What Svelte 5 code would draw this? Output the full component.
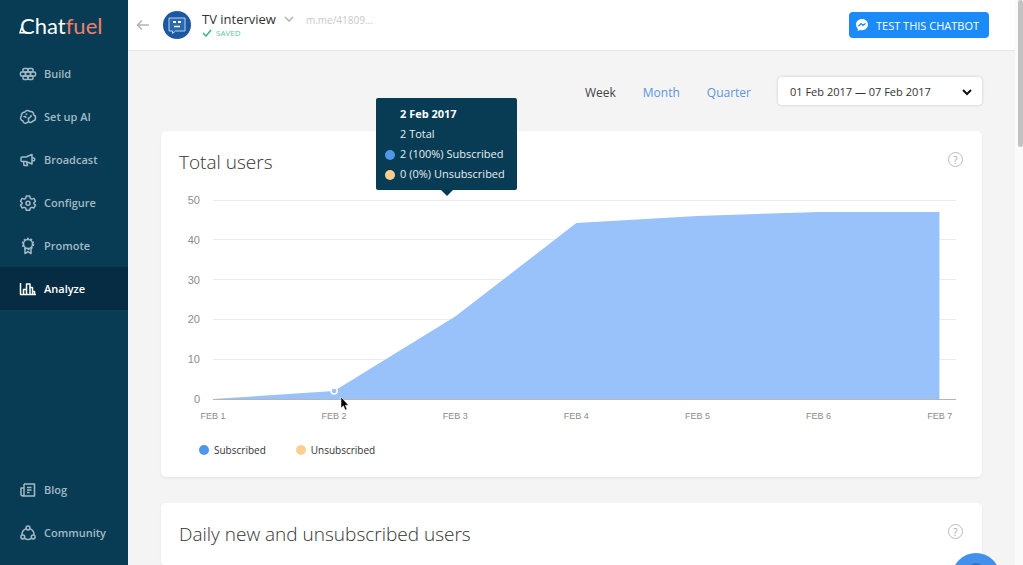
<script>
  const mainLinks = [
    { name: 'Build', icon: 'build' },
    { name: 'Set up AI', icon: 'ai' },
    { name: 'Broadcast', icon: 'broadcast' },
    { name: 'Configure', icon: 'configure' },
    { name: 'Promote', icon: 'promote' },
    { name: 'Analyze', icon: 'analyze' }
  ];

  const footLinks = [
    { name: 'Blog', icon: 'blog' },
    { name: 'Community', icon: 'community' }
  ];

  let active = 'Analyze';

  const periods = ['Week', 'Month', 'Quarter'];
  let period = 'Week';

  const ranges = ['01 Feb 2017 — 07 Feb 2017'];
  let range = ranges[0];

  // total subscribed users per day
  const data = [0, 2, 20.7, 44.2, 46, 47, 47];
  const ticks = [50, 40, 30, 20, 10, 0];
  const max = 50;
  // share of the plot width taken by the days, the grid runs a bit further
  const span = 97.8;

  let hovered = 1;

  const xPos = (i) => `${(i / (data.length - 1)) * span}%`;
  const yPos = (v) => `${100 - (v / max) * 100}%`;

  $: area =
    `0,${max} ` +
    data.map((v, i) => `${i},${max - v}`).join(' ') +
    ` ${data.length - 1},${max}`;
</script>

<div class="app">
  <aside class="sidebar">
    <a class="logo" href="#home" aria-label="Chatfuel">
      <svg class="logo-tail" width="10" height="6" viewBox="0 0 10 6">
        <path d="M2.500 0 L1 4.800 H8" />
      </svg>
      <span>Chat</span><span class="fuel">fuel</span>
    </a>

    <nav class="main-nav">
      {#each mainLinks as link}
        <a class="item" class:active={link.name === active} href={'#' + link.icon}>
          <svg class="icon" width="18" height="18" viewBox="0 0 18 18">
            {#if link.icon === 'build'}
              <rect x="4" y="3.5" width="5" height="3.6" rx="1" />
              <rect x="9" y="3.5" width="5" height="3.6" rx="1" />
              <rect x="1.5" y="7.1" width="5" height="3.8" rx="1" />
              <rect x="6.5" y="7.1" width="5" height="3.8" rx="1" />
              <rect x="11.5" y="7.1" width="5" height="3.8" rx="1" />
              <rect x="4" y="10.9" width="5" height="3.6" rx="1" />
              <rect x="9" y="10.9" width="5" height="3.6" rx="1" />
            {:else if link.icon === 'ai'}
              <path d="M7 15 C5.500 15.500 4 14.500 4 13 C1.500 12.500 0.800 9.500 2.400 8 C2 5.500 4 4 5.600 4.300 C6.500 2 9.800 2 11 3.600 C13.500 3.200 15 5 14.600 6.800 C17.500 8 17.200 12.500 14 13 C12.500 14.800 10.500 14.800 9.500 13.500 C9 14.500 8 15 7 15 Z" />
              <path d="M9.500 13.500 V9.500 M9.500 10.500 L12 8.500 V7 M4.500 9 C5.500 8 7 8.500 7 10 M7.500 5.500 V7" />
            {:else if link.icon === 'broadcast'}
              <path d="M13 3.500 L7 6 H3 Q2 6 2 7 V9.500 Q2 10.500 3 10.500 H7 L13 13 Z" />
              <path d="M13 7 H15 Q16.500 8.200 15 9.700 H13 M4.500 10.500 L5 14.500 H8.500 L7.500 10.800" />
            {:else if link.icon === 'configure'}
              <path d="M7.300 2 H10.700 L11.200 4.200 L12.700 5.100 L14.900 4.400 L16.500 7.300 L14.900 8.800 V9.700 L16.500 11.100 L14.900 14 L12.700 13.300 L11.200 14.200 L10.700 16.300 H7.300 L6.800 14.200 L5.300 13.300 L3.100 14 L1.500 11.100 L3.100 9.600 V8.700 L1.500 7.300 L3.100 4.400 L5.300 5.100 L6.800 4.200 Z" />
              <circle cx="9" cy="9.200" r="2" />
            {:else if link.icon === 'promote'}
              <circle cx="9" cy="7" r="4.500" />
              <circle cx="9" cy="7" r="5.500" stroke-dasharray="2 1.450" />
              <path d="M6 11.500 V16.500 L9 14.700 L12 16.500 V11.500" />
            {:else}
              <path d="M1.500 3 V14.500 H17 M4.500 14 V9.500 H7.500 V14 M7.500 10 V4 H11 V14 M11 7.500 H13.500 V14 M13.500 11.500 H15.500 V14" />
            {/if}
          </svg>
          {link.name}
        </a>
      {/each}
    </nav>

    <nav class="foot-nav">
      {#each footLinks as link}
        <a class="item" href={'#' + link.icon}>
          <svg class="icon" width="18" height="18" viewBox="0 0 18 18">
            {#if link.icon === 'blog'}
              <path d="M5 3 H15.500 V15 H4 Q2 15 2 13 V7 H5 M5 3 V13 Q5 15 3.500 15 M8 6.500 H12.500 M8 9 H12.500 M8 11.500 H10.500" />
            {:else}
              <circle cx="9" cy="4" r="1.900" />
              <circle cx="3.800" cy="13" r="1.900" />
              <circle cx="14.200" cy="13" r="1.900" />
              <path d="M7 4.600 Q2.800 6.500 3 11 M11 4.600 Q15.200 6.500 15 11 M5.500 14.300 Q9 16.500 12.500 14.300" />
            {/if}
          </svg>
          {link.name}
        </a>
      {/each}
    </nav>
  </aside>

  <div class="page">
    <header class="topbar">
      <a class="back" href="#back" aria-label="Back">
        <svg width="14" height="12" viewBox="0 0 14 12">
          <path d="M13 6 H1.500 M6 1.500 L1.500 6 L6 10.500" />
        </svg>
      </a>
      <svg class="avatar" width="28" height="28" viewBox="0 0 28 28">
        <circle cx="14" cy="14" r="14" fill="#1c57a0" />
        <path d="M6 7 H22 V20 H12.500 L9.500 22.500 V20 H6 Z" fill="#2a68b0" stroke="#b7d3ef" />
        <path d="M10 11 H13 M15 11 H18" stroke="#fff" stroke-width="2" />
        <path d="M11 15.500 H17" stroke="#fff" stroke-width="1.500" />
      </svg>
      <div class="bot">
        <button class="bot-name">
          TV interview
          <svg width="10" height="6" viewBox="0 0 10 6"><path d="M1 1 L5 5 L9 1" /></svg>
        </button>
        <div class="saved">
          <svg width="10" height="8" viewBox="0 0 10 8"><path d="M1 4 L4 7 L9 1" /></svg>
          SAVED
        </div>
      </div>
      <a class="bot-link" href="#messenger">m.me/41809...</a>
      <button class="test">
        <svg width="12" height="12" viewBox="0 0 12 12">
          <path d="M6 0 C2.600 0 0 2.400 0 5.600 C0 7.300 0.700 8.700 1.800 9.700 V12 L3.900 10.900 C4.600 11.100 5.300 11.200 6 11.200 C9.400 11.200 12 8.800 12 5.600 C12 2.400 9.400 0 6 0 Z" fill="#fff" />
          <path d="M2.500 7.200 L5 4.600 L7 6.300 L9.500 4.400" fill="none" stroke="#1b8bf9" stroke-width="1.300" />
        </svg>
        TEST THIS CHATBOT
      </button>
    </header>

    <main class="content">
      <div class="filters">
        {#each periods as p}
          <button class="period" class:current={p === period} on:click={() => (period = p)}>{p}</button>
        {/each}
        <div class="range">
          <select aria-label="Date range" bind:value={range}>
            {#each ranges as r}
              <option value={r}>{r}</option>
            {/each}
          </select>
          <svg width="10" height="7" viewBox="0 0 10 7"><path d="M1 1 L5 5 L9 1" /></svg>
        </div>
      </div>

      <section class="card">
        <div class="card-head">
          <h2>Total users</h2>
          <button class="help" aria-label="Help">?</button>
        </div>

        <div class="plot">
          <svg class="chart" role="img" aria-label="Total users by day">
            {#each ticks as tick}
              <line class:base={tick === 0} x1="0" x2="100%" y1={yPos(tick)} y2={yPos(tick)} />
              <text class="tick" x="-13" y={yPos(tick)} dy="4">{tick}</text>
            {/each}
            <svg width="{span}%" height="100%" viewBox="0 0 {data.length - 1} {max}" preserveAspectRatio="none">
              <polygon points={area} />
            </svg>
            {#each data as _, i}
              <text class="day" x={xPos(i)} y="100%" dy="20">FEB {i + 1}</text>
            {/each}
            <circle cx={xPos(hovered)} cy={yPos(data[hovered])} r="3" />
          </svg>

          <div class="tooltip">
            <strong>2 Feb 2017</strong>
            <span>2 Total</span>
            <span><i class="dot blue"></i>2 (100%) Subscribed</span>
            <span><i class="dot sand"></i>0 (0%) Unsubscribed</span>
          </div>

          <svg class="pointer" width="9" height="15" viewBox="0 0 9 15">
            <path d="M1 1 V12 L3.400 9.800 L5.200 14 L7 13.200 L5.300 9.200 H8.500 Z" />
          </svg>
        </div>

        <div class="legend">
          <span><i class="dot blue"></i>Subscribed</span>
          <span><i class="dot sand"></i>Unsubscribed</span>
        </div>
      </section>

      <section class="card">
        <div class="card-head">
          <h2>Daily new and unsubscribed users</h2>
          <button class="help" aria-label="Help">?</button>
        </div>
      </section>
    </main>
  </div>

  <div class="scrollbar"><div class="thumb"></div></div>

  <button class="chat" aria-label="Chat with us">
    <svg width="16" height="16" viewBox="0 0 16 16"><path d="M8 1 C12 1 15 4 15 7 C15 11 12 13 8 13 L3 15 V11 C0 8 1 1 8 1 Z" /></svg>
  </button>
</div>

<style>
  :global(body) {
    margin: 0;
    font-family: 'Open Sans', 'Noto Sans', sans-serif;
    color: #333;
  }

  button {
    padding: 0;
    border: 0;
    background: none;
    font: inherit;
    color: inherit;
    cursor: pointer;
  }

  a {
    color: inherit;
    text-decoration: none;
  }

  svg {
    flex-shrink: 0;
  }

  .app {
    position: relative;
    display: flex;
    height: 100vh;
    overflow: hidden;
    background: #f4f4f4;
  }

  /* sidebar */
  .sidebar {
    display: flex;
    flex-direction: column;
    flex-shrink: 0;
    box-sizing: border-box;
    width: 128px;
    padding-bottom: 11px;
    background: #083c54;
  }

  .logo {
    position: relative;
    display: flex;
    align-items: center;
    height: 50px;
    padding-left: 20px;
    font-family: Lato, sans-serif;
    font-size: 22px;
    color: #fff;
  }

  .logo-tail {
    position: absolute;
    left: 19px;
    top: 28px;
    fill: none;
    stroke: #fff;
    stroke-width: 1.5;
  }

  .fuel {
    color: #f0806c;
  }

  .main-nav {
    margin-top: 2px;
  }

  .foot-nav {
    margin-top: auto;
  }

  .item {
    display: flex;
    align-items: center;
    gap: 7px;
    height: 43px;
    padding-left: 19px;
    font-size: 11px;
    font-weight: 600;
    color: #a3bac6;
  }

  .item.active {
    background: #052c42;
    color: #fff;
  }

  .icon {
    fill: none;
    stroke: currentColor;
    stroke-width: 1.5;
    stroke-linejoin: round;
  }

  /* top bar */
  .page {
    flex: 1;
    min-width: 0;
  }

  .topbar {
    display: flex;
    align-items: center;
    box-sizing: border-box;
    height: 51px;
    padding: 0 26px 0 8px;
    border-bottom: 1px solid #e6e6e6;
    background: #fff;
  }

  .back {
    display: flex;
    margin-right: 13px;
  }

  .back svg,
  .bot-name svg {
    fill: none;
    stroke: #b4b4b4;
    stroke-width: 1.5;
  }

  .avatar {
    margin-right: 11px;
  }

  .bot {
    margin-bottom: 3px;
  }

  .bot-name {
    display: flex;
    align-items: center;
    gap: 8px;
    font-size: 13px;
    line-height: 18px;
  }

  .saved {
    display: flex;
    align-items: center;
    gap: 4px;
    font-size: 8px;
    line-height: 10px;
    color: #5cc9a0;
  }

  .saved svg {
    fill: none;
    stroke: #2fb887;
    stroke-width: 1.5;
  }

  .bot-link {
    margin: 0 auto 10px 12px;
    font-size: 10px;
    line-height: 14px;
    color: #c8c8c8;
  }

  .test {
    display: flex;
    align-items: center;
    gap: 8px;
    height: 26px;
    padding: 0 10px 0 7px;
    border-radius: 4px;
    background: #1b8bf9;
    font-size: 11px;
    color: #fff;
  }

  /* content */
  .content {
    padding: 26px 33px 0;
  }

  .filters {
    display: flex;
    align-items: center;
    justify-content: flex-end;
    gap: 27px;
    margin-bottom: 26px;
  }

  .period {
    margin-top: 2px;
    font-size: 12px;
    color: #5c94de;
  }

  .period.current {
    color: #444;
  }

  .range {
    position: relative;
    width: 204px;
  }

  .range select {
    box-sizing: border-box;
    width: 100%;
    height: 28px;
    padding: 0 12px;
    border: 0;
    border-radius: 4px;
    background: #fff;
    box-shadow: 0 0 3px rgba(0, 0, 0, 0.2);
    appearance: none;
    font: inherit;
    font-size: 11px;
    color: #333;
  }

  .range svg {
    position: absolute;
    right: 10px;
    top: 12px;
    fill: none;
    stroke: #111;
    stroke-width: 2;
    pointer-events: none;
  }

  .card {
    margin-bottom: 26px;
    padding: 18px 18px 19px;
    border-radius: 5px;
    background: #fff;
    box-shadow: 0 1px 2px rgba(0, 0, 0, 0.08);
  }

  .card-head {
    display: flex;
    align-items: flex-start;
    justify-content: space-between;
  }

  h2 {
    margin: 0;
    font-size: 19px;
    font-weight: 300;
    line-height: 26px;
  }

  .help {
    box-sizing: border-box;
    width: 15px;
    height: 15px;
    margin: 3px 1px 0 0;
    border: 1px solid #bbb;
    border-radius: 50%;
    font-size: 10px;
    line-height: 12px;
    color: #aaa;
  }

  .plot {
    position: relative;
    height: 199px;
    margin: 25px 8px 0 34px;
  }

  .chart {
    display: block;
    width: 100%;
    height: 100%;
    overflow: visible;
    font-family: 'Liberation Sans', Arial, sans-serif;
  }

  .chart line {
    stroke: #ececec;
    shape-rendering: crispEdges;
  }

  .chart line.base {
    stroke: #b5b5b5;
  }

  .chart polygon {
    fill: #98c2f9;
  }

  .chart circle {
    fill: #98c2f9;
    stroke: #fff;
    stroke-width: 1.5;
  }

  .tick {
    font-size: 11px;
    fill: #8c8c8c;
    text-anchor: end;
  }

  .day {
    font-size: 9px;
    fill: #8c8c8c;
    text-anchor: middle;
  }

  .dot {
    width: 10px;
    height: 10px;
    border-radius: 50%;
  }

  .blue {
    background: #4f97e8;
  }

  .sand {
    background: #ffcf91;
  }

  .tooltip {
    position: absolute;
    bottom: calc(100% + 10px);
    left: 163px;
    display: flex;
    flex-direction: column;
    box-sizing: border-box;
    width: 141px;
    padding: 6px 0 6px 24px;
    border-radius: 2px;
    background: #083c54;
    font-size: 11px;
    line-height: 20px;
    white-space: nowrap;
    color: #e6eef2;
  }

  .tooltip strong {
    font-weight: 700;
    color: #fff;
  }

  .tooltip .dot {
    display: inline-block;
    margin: 0 5px 0 -15px;
    vertical-align: middle;
  }

  .tooltip::after {
    content: '';
    position: absolute;
    top: 100%;
    left: 50%;
    margin-left: -6px;
    border: 6px solid transparent;
    border-top-color: #083c54;
    border-bottom: 0;
  }

  .pointer {
    position: absolute;
    top: 196px;
    left: 127px;
    fill: #000;
    stroke: #fff;
    stroke-width: 0.5;
  }

  .legend {
    display: flex;
    gap: 30px;
    margin: 43px 0 0 20px;
    font-size: 10px;
    line-height: 16px;
  }

  .legend span {
    display: flex;
    align-items: center;
    gap: 5px;
  }

  /* page scrollbar */
  .scrollbar {
    flex-shrink: 0;
    width: 8px;
    background: #fafafa;
  }

  .thumb {
    width: 5px;
    height: 26%;
    margin-left: auto;
    border-radius: 3px;
    background: #c2c2c2;
  }

  .chat {
    position: absolute;
    right: 23px;
    bottom: -36px;
    display: flex;
    justify-content: center;
    box-sizing: border-box;
    width: 48px;
    height: 48px;
    padding-top: 9px;
    border-radius: 50%;
    background: #4390ec;
  }

  .chat path {
    fill: #2f74c8;
  }
</style>
